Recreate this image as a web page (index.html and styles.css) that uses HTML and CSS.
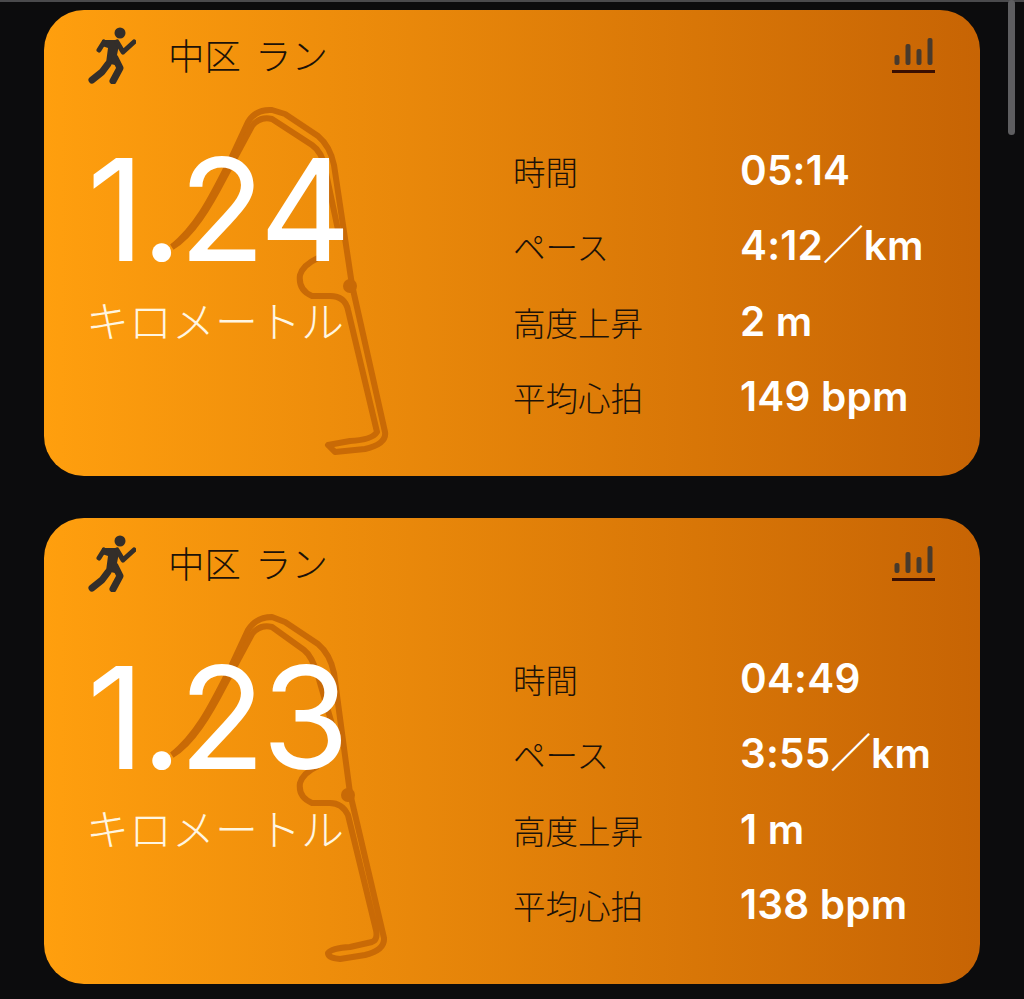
FILE: index.html
```html
<!DOCTYPE html>
<html lang="ja">
<head>
    <meta charset="UTF-8">
    <title>ラン</title>
    <link rel="stylesheet" href="styles.css">
</head>
<body>
    <div class="top-line"></div>
    <div class="scrollbar"></div>
    <div class="list">
        <div class="card">
            <svg class="route" viewBox="44 10 936 466">
                <path d="M172 247 C198 226 212 196 228 165 L248 122 Q256 109 272 110 L285 114 L318 136 Q330 146 334 165 L352 285 L385 432 Q387 444 365 449 L335 452 L328 445 L350 441 Q372 440 377 432 L348 310 Q345 296 330 296 L312 296 Q298 290 300 275 Q303 265 318 258"/>
                <path d="M172 247 C192 236 210 205 224 178 L252 126 Q260 116 272 119 L312 145 Q322 152 325 168 L338 230"/>
                <circle cx="350" cy="286" r="7"/>
            </svg>
            <div class="card-head">
                <div class="title">
                    <svg class="runner" viewBox="0 0 48 58">
                        <circle class="runner-head" cx="32" cy="7" r="5.5"/>
                        <path class="runner-head" d="M14 14 L30 14 L30 24 L27 39 L18 37 L20 22 L14 20 Z"/>
                        <path class="runner-arm" d="M16 16 L11 24 M29 16 L35 26 L46 16"/>
                        <path class="runner-leg" d="M27 32 L32 42 L25 55 M20 38 L14 46 L4 54"/>
                    </svg>
                    <span>中区 ラン</span>
                </div>
                <svg class="bars" viewBox="0 0 44 36">
                    <rect x="2.5" y="17" width="5" height="10" rx="2"/>
                    <rect x="13.5" y="6" width="5" height="21" rx="2"/>
                    <rect x="24.5" y="11" width="5" height="16" rx="2"/>
                    <rect x="35.5" y="0" width="5" height="27" rx="2"/>
                    <rect class="bars-line" x="0" y="32" width="43" height="3"/>
                </svg>
            </div>
            <div class="card-body">
                <div class="distance">
                    <div class="distance-num">1.24</div>
                    <div class="distance-unit">キロメートル</div>
                </div>
                <div class="stats">
                    <span class="stat-label">時間</span><span class="stat-value">05:14</span>
                    <span class="stat-label">ペース</span><span class="stat-value">4:12／km</span>
                    <span class="stat-label">高度上昇</span><span class="stat-value">2 m</span>
                    <span class="stat-label">平均心拍</span><span class="stat-value">149 bpm</span>
                </div>
            </div>
        </div>

        <div class="card">
            <svg class="route" viewBox="44 518 936 466">
                <path d="M172 755 C198 734 212 704 228 673 L248 630 Q256 617 272 617 L285 622 L318 644 Q330 654 334 673 L350 793 L384 938 Q385 950 365 955 L340 959 Q328 958 328 953 Q332 948 350 947 L372 942 Q378 940 376 930 L348 815 Q342 803 330 803 L312 803 Q298 797 300 783 Q303 773 318 766"/>
                <path d="M172 755 C192 744 210 713 224 686 L252 634 Q260 624 272 627 L304 650 Q312 656 318 676 L336 738"/>
                <circle cx="348" cy="795" r="7"/>
            </svg>
            <div class="card-head">
                <div class="title">
                    <svg class="runner" viewBox="0 0 48 58">
                        <circle class="runner-head" cx="32" cy="7" r="5.5"/>
                        <path class="runner-head" d="M14 14 L30 14 L30 24 L27 39 L18 37 L20 22 L14 20 Z"/>
                        <path class="runner-arm" d="M16 16 L11 24 M29 16 L35 26 L46 16"/>
                        <path class="runner-leg" d="M27 32 L32 42 L25 55 M20 38 L14 46 L4 54"/>
                    </svg>
                    <span>中区 ラン</span>
                </div>
                <svg class="bars" viewBox="0 0 44 36">
                    <rect x="2.5" y="17" width="5" height="10" rx="2"/>
                    <rect x="13.5" y="6" width="5" height="21" rx="2"/>
                    <rect x="24.5" y="11" width="5" height="16" rx="2"/>
                    <rect x="35.5" y="0" width="5" height="27" rx="2"/>
                    <rect class="bars-line" x="0" y="32" width="43" height="3"/>
                </svg>
            </div>
            <div class="card-body">
                <div class="distance">
                    <div class="distance-num">1.23</div>
                    <div class="distance-unit">キロメートル</div>
                </div>
                <div class="stats">
                    <span class="stat-label">時間</span><span class="stat-value">04:49</span>
                    <span class="stat-label">ペース</span><span class="stat-value">3:55／km</span>
                    <span class="stat-label">高度上昇</span><span class="stat-value">1 m</span>
                    <span class="stat-label">平均心拍</span><span class="stat-value">138 bpm</span>
                </div>
            </div>
        </div>
    </div>
</body>
</html>
```

FILE: styles.css
```css
html, body {
    height: 999px;
    overflow: hidden;
}

body {
    background-color: #0c0c0d;
    margin: 0;
    font-family: Inter, "Noto Sans CJK JP", sans-serif;
}

.top-line {
    height: 2px;
    background-color: #4a4a4c;
}

.scrollbar {
    position: absolute;
    top: 0;
    right: 9px;
    width: 7px;
    height: 135px;
    border-radius: 4px;
    background-color: #5e5e60;
}

.list {
    display: flex;
    flex-direction: column;
    gap: 42px;
    padding: 8px 44px 0;
}

.card {
    position: relative;
    height: 466px;
    border-radius: 40px;
    background: linear-gradient(90deg, #ff9f0e, #c76404);
    overflow: hidden;
}

.route {
    position: absolute;
    top: 0;
    left: 0;
    width: 100%;
    height: 100%;
    fill: none;
    stroke: #c96a06;
    stroke-width: 6;
    stroke-linejoin: round;
}

.route circle {
    fill: #c96a06;
    stroke: none;
}

.card-head {
    position: relative;
    display: flex;
    justify-content: space-between;
    align-items: flex-start;
    padding: 16px 44px 0;
    height: 70px;
}

.title {
    display: flex;
    align-items: center;
    gap: 32px;
    font-family: "Noto Sans CJK JP", sans-serif;
    font-size: 36.5px;
    font-weight: 300;
    line-height: 1;
    word-spacing: 6px;
    color: #1c1208;
}

.runner {
    width: 48px;
    height: 58px;
}

.runner-head {
    fill: #332e2a;
}

.runner-arm, .runner-leg {
    fill: none;
    stroke: #332e2a;
    stroke-linecap: round;
    stroke-linejoin: round;
}

.runner-arm {
    stroke-width: 5;
}

.runner-leg {
    stroke-width: 7;
}

.bars {
    width: 44px;
    height: 36px;
    margin-top: 12px;
    fill: #483a2c;
}

.bars-line {
    fill: #3a0f02;
}

.card-body {
    position: relative;
    display: flex;
    padding: 33px 44px 0;
}

.distance {
    width: 425px;
}

.distance-num {
    font-size: 142px;
    font-weight: 400;
    line-height: 160px;
    letter-spacing: -3.5px;
    margin-left: -1px;
    color: #fff;
}

.distance-unit {
    font-family: "Noto Sans CJK JP", sans-serif;
    font-size: 43px;
    font-weight: 300;
    line-height: 60px;
    margin-left: -2px;
    color: #fff6e2;
}

.stats {
    display: grid;
    grid-template-columns: 227px auto;
    grid-auto-rows: 75.5px;
    align-items: center;
    padding-top: 4px;
}

.stat-label {
    font-family: "Noto Sans CJK JP", sans-serif;
    font-size: 32.5px;
    font-weight: 300;
    line-height: 1;
    color: #1c1208;
}

.stat-value {
    font-size: 40.5px;
    font-weight: 600;
    line-height: 1;
    letter-spacing: 0.2px;
    color: #fff;
}
```
